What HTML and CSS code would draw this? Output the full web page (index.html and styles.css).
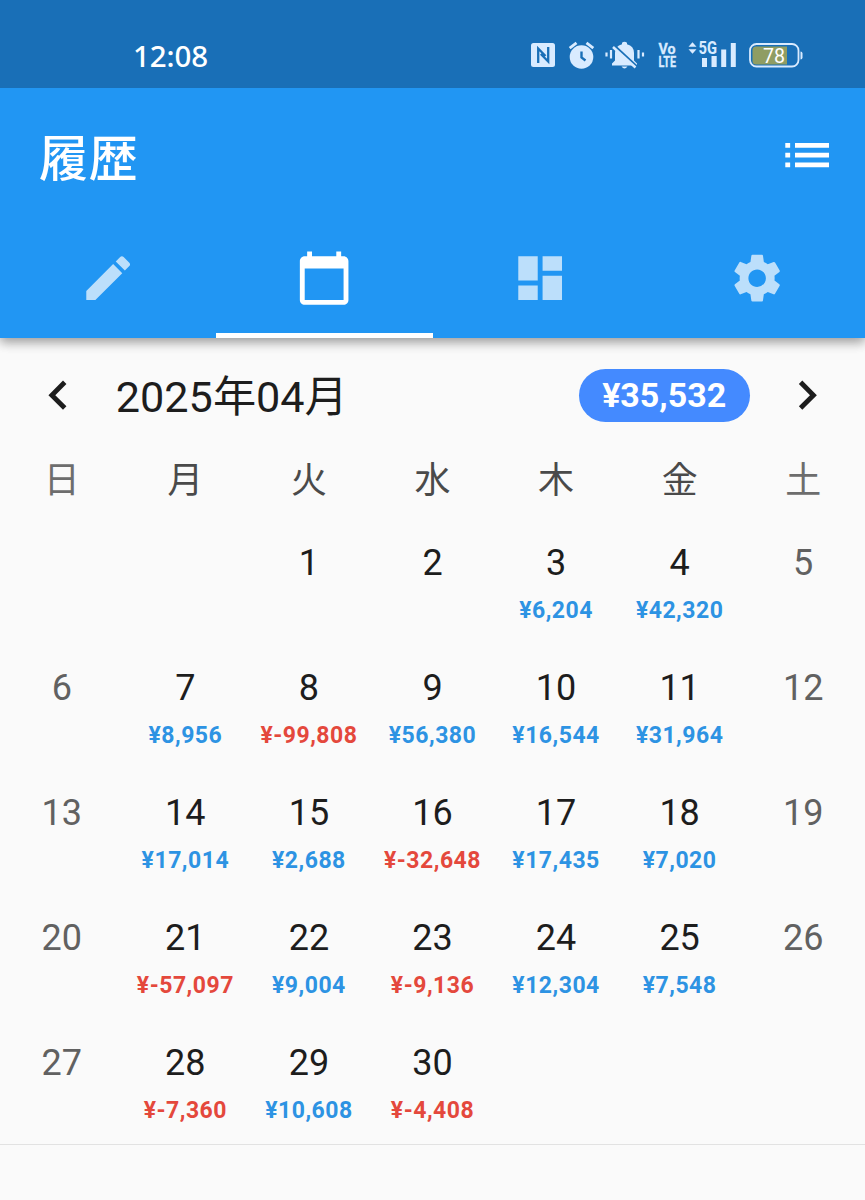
FILE: index.html
```html
<!DOCTYPE html>
<html lang="ja">
<head>
<meta charset="utf-8">
<title>履歴</title>
<link rel="stylesheet" href="styles.css">
</head>
<body>
<div class="status">
  <span class="clock">12:08</span>
  <svg class="status-icons" width="280" height="40" viewBox="525 35 280 40">
    <g fill="#d9ebff">
      <rect x="531" y="43" width="24" height="24" rx="2.5"/>
      <path d="M538.200 63V48.500L545.500 56M548.200 47V61.500L540.800 54" fill="none" stroke="#196fb7" stroke-width="2.300"/>
      <circle cx="581.5" cy="57" r="11.8"/>
      <path d="M569.7 48.2l6.8-5.3M593.3 48.2l-6.8-5.3" stroke="#d9ebff" stroke-width="2.8"/>
      <path d="M581.5 51.5v6l4 3" fill="none" stroke="#196fb7" stroke-width="2.4"/>
      <path d="M612 65.5v-2l3-3v-7.500q0-7 7-8.800v-1.400q2.500-2 5 0v1.400q7 1.800 7 8.800v7.500l3 3v2zM621.500 66.500h6q-3 4-6 0z"/>
      <path d="M606.500 52.500v4M611 50v8.500M638.500 50v8.500M643 52.500v4" stroke="#d9ebff" stroke-width="2.200"/>
      <path d="M615.500 47l21 19.500" stroke="#196fb7" stroke-width="3"/>
      <path d="M613 47l22.500 20.500" stroke="#d9ebff" stroke-width="2.500"/>
      <text x="658.500" y="54" class="tiny" textLength="17" lengthAdjust="spacingAndGlyphs">Vo</text>
      <text x="658.500" y="67" class="tiny" textLength="17.500" lengthAdjust="spacingAndGlyphs">LTE</text>
      <path d="M688.500 46.800l4-4.600 4 4.600zM688.500 49.200l4 4.600 4-4.600z"/>
      <text x="698.500" y="53.900" class="net" textLength="18.500" lengthAdjust="spacingAndGlyphs">5G</text>
      <path d="M702 58h5v9h-5zM711.500 56h5.200v11h-5.200zM721.200 49.500h5v17.500h-5zM730.800 43h5v24h-5z"/>
      <rect x="750" y="44" width="48.500" height="22.500" rx="6.500" fill="none" stroke="#d9ebff" stroke-width="1.800"/>
      <path d="M756 46.500h31v18h-31q-3.500 0-3.500-3.500v-11q0-3.500 3.500-3.500z" fill="#8f9d63"/>
      <path d="M800.500 51.500q2 0 2 2v4q0 2-2 2z"/>
      <text x="763" y="62.700" class="battery" textLength="22" lengthAdjust="spacingAndGlyphs">78</text>
    </g>
  </svg>
</div>
<header class="appbar">
  <div class="toolbar">
    <h1>履歴</h1>
    <svg class="icon" viewBox="0 0 24 24"><path d="M3 13h2v-2H3v2zm0 4h2v-2H3v2zm0-8h2V7H3v2zm4 4h14v-2H7v2zm0 4h14v-2H7v2zM7 7v2h14V7H7z"/></svg>
  </div>
  <nav class="tabs">
    <a class="tab"><svg class="icon" viewBox="0 0 24 24"><path d="M3 17.250V21h3.750L17.810 9.940l-3.750-3.750L3 17.250zM20.710 7.040c.39-.39.39-1.020 0-1.410l-2.340-2.340c-.39-.39-1.020-.39-1.410 0l-1.830 1.830 3.750 3.750 1.830-1.830z"/></svg></a>
    <a class="tab active"><svg class="icon" viewBox="0 0 24 24"><path d="M20 3h-1V1h-2v2H7V1H5v2H4c-1.100 0-2 .9-2 2v16c0 1.100.9 2 2 2h16c1.100 0 2-.9 2-2V5c0-1.100-.9-2-2-2zm0 18H4V8h16v13z"/></svg></a>
    <a class="tab"><svg class="icon" viewBox="0 0 24 24"><path d="M3 13h8V3H3v10zm0 8h8v-6H3v6zm10 0h8V11h-8v10zm0-18v6h8V3h-8z"/></svg></a>
    <a class="tab"><svg class="icon" viewBox="0 0 24 24"><path d="M19.140 12.940c.04-.3.060-.61.060-.94 0-.32-.02-.64-.07-.94l2.030-1.580c.18-.14.23-.41.12-.61l-1.920-3.320c-.12-.22-.37-.29-.59-.22l-2.390.96c-.5-.38-1.030-.7-1.620-.94l-.36-2.540c-.04-.24-.24-.41-.48-.41h-3.840c-.24 0-.43.17-.47.41l-.36 2.540c-.59.24-1.130.57-1.620.94l-2.390-.96c-.22-.08-.47 0-.59.22L2.740 8.870c-.12.21-.08.47.12.61l2.030 1.580c-.05.3-.09.63-.09.94s.02.64.07.94l-2.030 1.580c-.18.14-.23.41-.12.61l1.920 3.320c.12.22.37.29.59.22l2.390-.96c.5.38 1.030.7 1.620.94l.36 2.540c.05.24.24.41.48.41h3.840c.24 0 .44-.17.47-.41l.36-2.540c.59-.24 1.130-.56 1.620-.94l2.390.96c.22.08.47 0 .59-.22l1.920-3.320c.12-.22.07-.47-.12-.61l-2.010-1.580zM12 15.600c-1.980 0-3.600-1.620-3.600-3.600s1.620-3.600 3.600-3.600 3.600 1.620 3.600 3.600-1.620 3.600-3.600 3.600z"/></svg></a>
  </nav>
</header>
<main>
  <div class="month">
    <svg class="icon" viewBox="0 0 24 24"><path d="M15.410 7.410L14 6l-6 6 6 6 1.410-1.410L10.830 12z"/></svg>
    <span class="month-name">2025年04月</span>
    <span class="total">¥35,532</span>
    <svg class="icon" viewBox="0 0 24 24"><path d="M10 6L8.590 7.410 13.170 12l-4.580 4.590L10 18l6-6z"/></svg>
  </div>
  <div class="weekdays"><span class="off">日</span><span>月</span><span>火</span><span>水</span><span>木</span><span>金</span><span class="off">土</span></div>
  <div class="days">
    <div></div><div></div><div>1</div><div>2</div><div>3<b>¥6,204</b></div><div>4<b>¥42,320</b></div><div class="off">5</div>
    <div class="off">6</div><div>7<b>¥8,956</b></div><div>8<b class="neg">¥-99,808</b></div><div>9<b>¥56,380</b></div><div>10<b>¥16,544</b></div><div>11<b>¥31,964</b></div><div class="off">12</div>
    <div class="off">13</div><div>14<b>¥17,014</b></div><div>15<b>¥2,688</b></div><div>16<b class="neg">¥-32,648</b></div><div>17<b>¥17,435</b></div><div>18<b>¥7,020</b></div><div class="off">19</div>
    <div class="off">20</div><div>21<b class="neg">¥-57,097</b></div><div>22<b>¥9,004</b></div><div>23<b class="neg">¥-9,136</b></div><div>24<b>¥12,304</b></div><div>25<b>¥7,548</b></div><div class="off">26</div>
    <div class="off">27</div><div>28<b class="neg">¥-7,360</b></div><div>29<b>¥10,608</b></div><div>30<b class="neg">¥-4,408</b></div><div></div><div></div><div></div>
  </div>
</main>
</body>
</html>
```
FILE: styles.css
```css
* { box-sizing: border-box; }
body {
  margin: 0;
  height: 1200px;
  overflow: hidden;
  background: #fafafa;
  color: #1d1d1d;
  font-family: Roboto, "Noto Sans CJK JP", sans-serif;
}
.icon { display: block; flex: none; width: 58.300px; height: 58.300px; fill: currentColor; }
.status {
  display: flex;
  justify-content: space-between;
  height: 88px;
  padding: 35px 60px 0 133px;
  background: #196fb7;
  color: #fff;
}
.clock {
  font: 500 29.500px/42px "Noto Sans", sans-serif;
  letter-spacing: -0.100px;
}
.status-icons { display: block; }
.tiny { font: 700 15.500px Roboto, sans-serif; stroke: #d9ebff; stroke-width: 0.300px; }
.net { font: 700 17.500px Roboto, sans-serif; }
.battery { font: 400 19.500px Roboto, sans-serif; fill: #fff; }
.appbar {
  height: 250px;
  background: #2196f3;
  color: #fff;
  box-shadow: 0 5px 10px rgba(0, 0, 0, .24), 0 2px 12px rgba(0, 0, 0, .2);
  clip-path: inset(0 0 -30px);
}
.toolbar {
  display: flex;
  align-items: center;
  justify-content: space-between;
  height: 136px;
  padding: 0 28.500px 1px 39px;
}
h1 { margin: 8px 0 0; font-size: 49px; line-height: 60px; font-weight: 500; letter-spacing: 0.800px; }
.tabs { display: grid; grid-template-columns: repeat(4, 1fr); height: 114px; }
.tab {
  display: flex;
  justify-content: center;
  padding-top: 24.500px;
  border-bottom: 5px solid transparent;
  color: #bcdffb;
}
.tab.active { color: #fff; border-color: #fff; }
.month {
  display: flex;
  align-items: center;
  height: 115px;
  padding: 0 29px;
}
.month-name { flex: 1; padding: 5px 0 0 28.500px; font-size: 43.200px; line-height: 60px; }
.total {
  width: 171px;
  margin-right: 28px;
  border-radius: 27px;
  background: #448aff;
  color: #fff;
  font-size: 34px;
  line-height: 53px;
  font-weight: 700;
  text-align: center;
}
.weekdays, .days { display: grid; grid-template-columns: repeat(7, 1fr); text-align: center; }
.weekdays { height: 77px; padding-top: 1px; font-size: 36px; line-height: 54px; color: #4a4a4a; }
.weekdays .off { color: #6d6d6d; }
.days {
  grid-auto-rows: 125px;
  height: 615px;
  border-bottom: 1px solid #e2e2e2;
  font-size: 36px;
  line-height: 67px;
}
.days .off { color: #616161; }
.days b { display: block; color: #2d93e3; font-size: 23px; line-height: 28px; letter-spacing: 0.500px; }
.days .neg { color: #e4483c; }
```
